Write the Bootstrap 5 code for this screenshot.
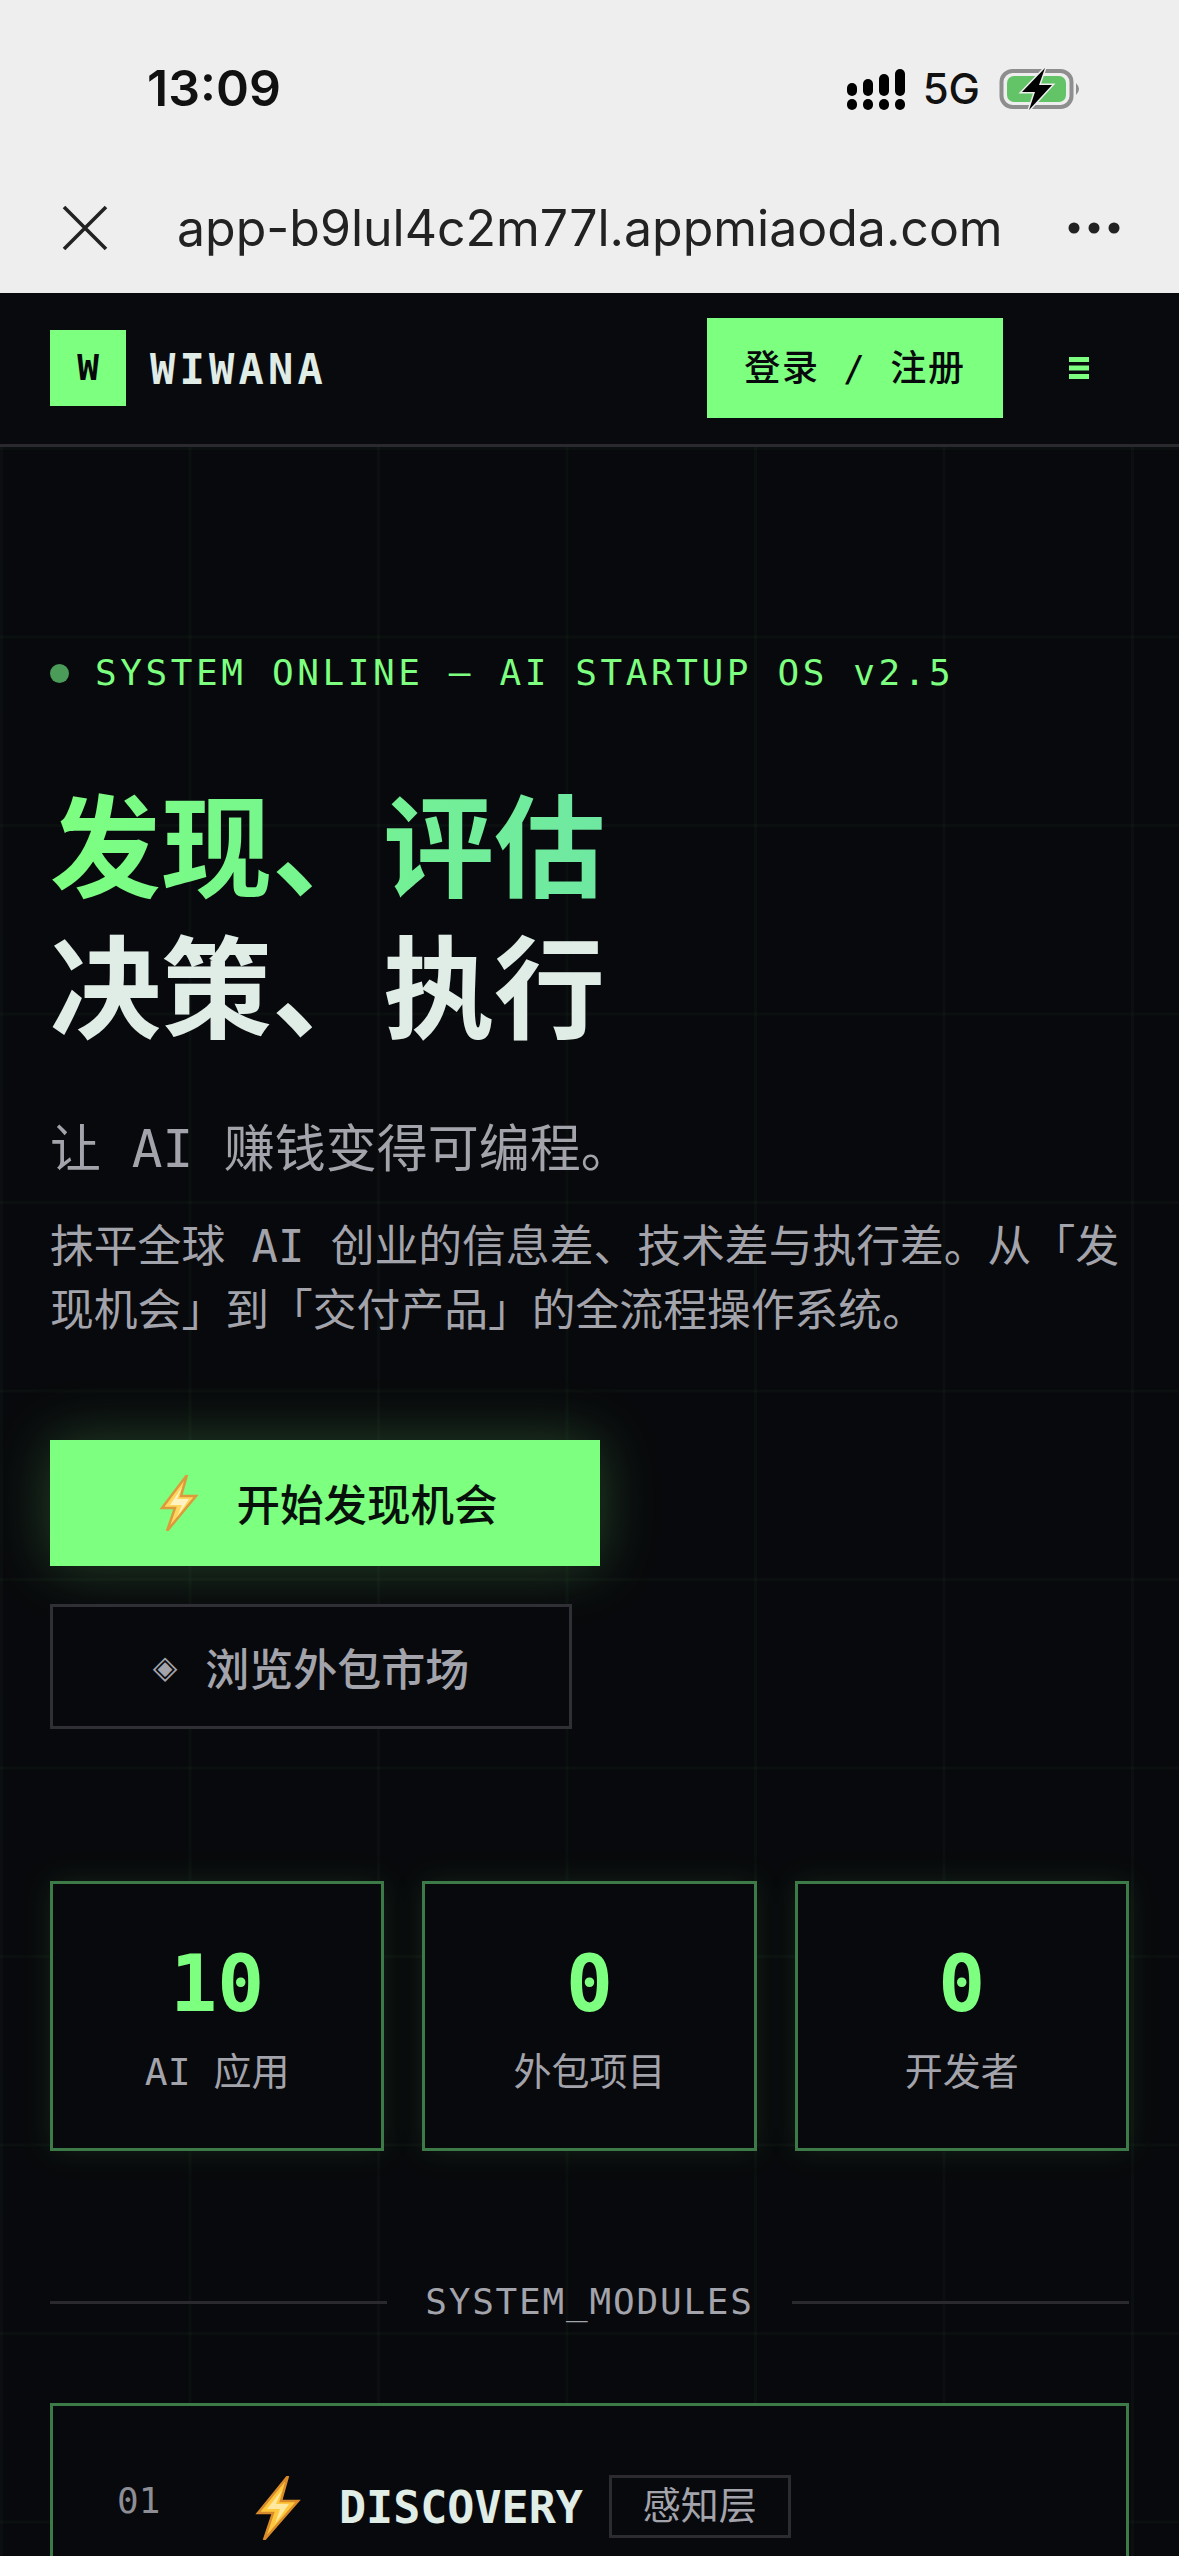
<!DOCTYPE html>
<html lang="zh-CN">

<head>
    <meta charset="UTF-8">
    <meta name="viewport" content="width=device-width, initial-scale=1.0">
    <title>WIWANA</title>
    <link href="https://cdn.jsdelivr.net/npm/bootstrap@5.3.0/dist/css/bootstrap.min.css" rel="stylesheet">
    <style>
        :root {
            --neon: #7dff80;
            --ink: #08090c;
            --pale: #e0ede6;
            --dim: #a3a3ab;
            --edge: #2b2b30;
            --mono: "DejaVu Sans Mono", "Noto Sans CJK SC", monospace;
        }

        html, body { height: 2556px; overflow: hidden; }
        body { background: var(--ink); font-family: var(--mono); }

        /* phone chrome */
        .phone-chrome { height: 293px; background: #eeeeee; color: #111; font-family: Inter, "Liberation Sans", sans-serif; }
        .status-row { height: 176px; padding: 56px 96px 0 147px; }
        .clock { font-size: 50px; line-height: 64px; font-weight: 600; }
        .net-label { font-size: 42px; line-height: 50px; font-weight: 500; margin: 0 19px 0 18px; }
        .url-row { height: 117px; padding: 0 59px 14px 62px; }
        .url-text { font-size: 50px; line-height: 70px; margin-left: 69px; color: #222; }

        /* top bar */
        .top-bar { height: 154px; padding: 0 50px 2px; background: #090a0d; border-bottom: 3px solid #29292e; }
        .logo-box { width: 76px; height: 76px; background: var(--neon); color: var(--ink); font-size: 36px; font-weight: 700; }
        .logo-name { color: var(--pale); font-size: 42px; font-weight: 700; letter-spacing: 4.2px; margin-left: 24px; padding-top: 3px; }
        .login-btn { width: 296px; height: 100px; border: 0; border-radius: 0; background: var(--neon); color: var(--ink); font-size: 36px; font-weight: 500; letter-spacing: 1.8px; padding: 2px 0 0; white-space: pre; }
        .menu-btn { width: 20px; margin: 0 40px 0 66px; color: var(--neon); }

        /* page */
        .page-body {
            height: 2263px;
            overflow: hidden;
            padding: 202px 50px 0;
            background-color: var(--ink);
            background-image:
                linear-gradient(rgba(125, 255, 128, 0.022) 3px, transparent 3px),
                linear-gradient(90deg, rgba(125, 255, 128, 0.022) 3px, transparent 3px);
            background-size: 188.5px 188.5px;
        }
        .eyebrow { color: var(--neon); font-size: 36px; line-height: 48px; letter-spacing: 3.6px; }
        .live-dot { width: 19px; height: 19px; border-radius: 50%; background: #4a9c58; margin-right: 26px; }
        .hero-title { margin: 73px 0 0; font-family: "Noto Sans CJK SC", sans-serif; font-size: 111px; line-height: 141px; font-weight: 700; color: var(--pale); }
        .hero-accent { background: linear-gradient(90deg, #7dff80, #6ee8a2); -webkit-background-clip: text; background-clip: text; color: transparent; }
        .hero-sub { margin: 62px 0 0; color: var(--dim); font-size: 51px; line-height: 72px; }
        .hero-text { margin: 29px 0 0; color: var(--dim); font-size: 43.8px; line-height: 64px; }
        .cta-main, .cta-alt { border-radius: 0; font-size: 44px; font-family: "Noto Sans CJK SC", sans-serif; }
        .cta-main { width: 550px; height: 126px; margin-top: 97px; padding: 0 0 0 6px; background: var(--neon); border: 0; color: #07100a; font-size: 43.5px; font-weight: 500; box-shadow: 0 0 60px rgba(125, 255, 128, 0.24); }
        .cta-alt { width: 522px; height: 125px; margin-top: 38px; padding: 0; background: var(--ink); border: 3px solid #2f2f35; color: var(--dim); font-weight: 500; }
        .cta-bolt { margin-right: 38px; }
        .alt-mark { font-family: "DejaVu Sans", sans-serif; font-size: 32px; margin-right: 28px; }

        .stat-row { --bs-gutter-x: 38px; margin-top: 152px; }
        .stat-box { height: 270px; padding-top: 58px; background: var(--ink); border: 3px solid #3c7a47; box-shadow: 0 0 30px rgba(125, 255, 128, 0.1); text-align: center; }
        .stat-num { color: var(--neon); font-size: 78px; line-height: 84px; font-weight: 700; }
        .stat-name { color: var(--dim); font-size: 38px; line-height: 48px; margin-top: 22px; }

        .module-head { margin-top: 127px; color: var(--dim); font-size: 36px; line-height: 48px; letter-spacing: 1.8px; }
        .module-rule { height: 3px; background: #29292e; }
        .module-head span { margin: 0 38px; }

        .module-box { margin-top: 77px; height: 400px; padding: 70px 64px 0; border: 3px solid #3c7a47; background: var(--ink); }
        .module-no { color: #8d8d95; font-size: 36px; line-height: 48px; width: 138px; margin-top: -15px; }
        .module-name { color: var(--pale); font-size: 45px; line-height: 60px; font-weight: 700; margin-left: 38px; }
        .module-tag { width: 182px; height: 63px; margin: -3px 0 0 26px; border: 3px solid var(--edge); color: var(--dim); font-size: 38px; }
    </style>
</head>

<body>
    <div class="phone-chrome">
        <div class="status-row d-flex justify-content-between align-items-start">
            <div class="clock">13:09</div>
            <div class="d-flex align-items-center pt-2">
                <svg width="58" height="41" viewBox="0 0 58 41">
                    <g fill="#000">
                        <rect x="0" y="14" width="10" height="13" rx="5"/>
                        <rect x="16" y="10" width="10" height="17" rx="5"/>
                        <rect x="32" y="5" width="10" height="22" rx="5"/>
                        <rect x="48" y="0" width="10" height="27" rx="5"/>
                        <rect x="0" y="30" width="10" height="11" rx="5"/>
                        <rect x="16" y="30" width="10" height="11" rx="5"/>
                        <rect x="32" y="30" width="10" height="11" rx="5"/>
                        <rect x="48" y="30" width="10" height="11" rx="5"/>
                    </g>
                </svg>
                <span class="net-label">5G</span>
                <svg width="84" height="42" viewBox="0 0 84 42">
                    <rect x="2.5" y="3" width="70" height="36" rx="11" fill="none" stroke="#8e8e8e" stroke-width="4"/>
                    <rect x="8" y="8" width="59" height="26" rx="7" fill="#62c466"/>
                    <path d="M77 15 Q83 21 77 27Z" fill="#8e8e8e"/>
                    <path d="M46 0 L23 24 H36 L30 42 L53 17 H40 Z" fill="#000" stroke="#eee" stroke-width="3" paint-order="stroke"/>
                </svg>
            </div>
        </div>
        <div class="url-row d-flex align-items-center">
            <svg width="46" height="46" viewBox="0 0 46 46">
                <path d="M2 2 L44 44 M44 2 L2 44" stroke="#222" stroke-width="3.6" fill="none"/>
            </svg>
            <div class="url-text flex-grow-1">app-b9lul4c2m77l.appmiaoda.com</div>
            <svg width="52" height="12" viewBox="0 0 52 12">
                <circle cx="6" cy="6" r="5.5" fill="#222"/>
                <circle cx="26" cy="6" r="5.5" fill="#222"/>
                <circle cx="46" cy="6" r="5.5" fill="#222"/>
            </svg>
        </div>
    </div>

    <nav class="navbar top-bar flex-nowrap">
        <div class="d-flex align-items-center">
            <div class="logo-box d-flex align-items-center justify-content-center">W</div>
            <div class="logo-name">WIWANA</div>
        </div>
        <div class="d-flex align-items-center">
            <button class="btn login-btn">登录 / 注册</button>
            <svg class="menu-btn" width="20" height="22" viewBox="0 0 20 22">
                <path d="M0 2.5H20M0 11H20M0 19.5H20" stroke="#7dff80" stroke-width="5"/>
            </svg>
        </div>
    </nav>

    <main class="page-body">
        <div class="eyebrow d-flex align-items-center">
            <span class="live-dot"></span>
            <span>SYSTEM ONLINE — AI STARTUP OS v2.5</span>
        </div>

        <h1 class="hero-title"><span class="hero-accent">发现、评估</span><br>决策、执行</h1>
        <p class="hero-sub">让 AI 赚钱变得可编程。</p>
        <p class="hero-text">抹平全球 AI 创业的信息差、技术差与执行差。从「发现机会」到「交付产品」的全流程操作系统。</p>

        <div class="d-flex flex-column align-items-start">
            <button class="btn cta-main d-flex align-items-center justify-content-center">
                <svg class="cta-bolt" width="40" height="56" viewBox="0 0 40 56">
                    <path d="M28 0 L3 33 H16 L8 56 L37 21 H22 Z" fill="#ffd75e" stroke="#dc9a3c" stroke-width="2.5"/>
                    <path d="M23 12 L11 30 H23 L18 42 L30 24 H18 Z" fill="#fff3c4"/>
                </svg>
                开始发现机会
            </button>
            <button class="btn cta-alt d-flex align-items-center justify-content-center">
                <span class="alt-mark">◈</span>浏览外包市场
            </button>
        </div>

        <div class="row stat-row">
            <div class="col-4">
                <div class="stat-box">
                    <div class="stat-num">10</div>
                    <div class="stat-name">AI 应用</div>
                </div>
            </div>
            <div class="col-4">
                <div class="stat-box">
                    <div class="stat-num">0</div>
                    <div class="stat-name">外包项目</div>
                </div>
            </div>
            <div class="col-4">
                <div class="stat-box">
                    <div class="stat-num">0</div>
                    <div class="stat-name">开发者</div>
                </div>
            </div>
        </div>

        <div class="module-head d-flex align-items-center">
            <div class="module-rule flex-grow-1"></div>
            <span>SYSTEM_MODULES</span>
            <div class="module-rule flex-grow-1"></div>
        </div>

        <div class="module-box">
            <div class="d-flex align-items-center">
                <div class="module-no">01</div>
                <svg width="46" height="64" viewBox="0 0 46 64">
                    <path d="M33 0 L3 37 H18 L9 64 L43 25 H26 Z" fill="#ffc83d" stroke="#d98a2b" stroke-width="2.5"/>
                    <path d="M27 14 L12 33 H25 L20 48 L34 28 H21 Z" fill="#ffe9a0"/>
                </svg>
                <div class="module-name">DISCOVERY</div>
                <div class="module-tag d-flex align-items-center justify-content-center">感知层</div>
            </div>
        </div>
    </main>

    <script src="https://cdn.jsdelivr.net/npm/bootstrap@5.3.0/dist/js/bootstrap.bundle.min.js"></script>
</body>

</html>
